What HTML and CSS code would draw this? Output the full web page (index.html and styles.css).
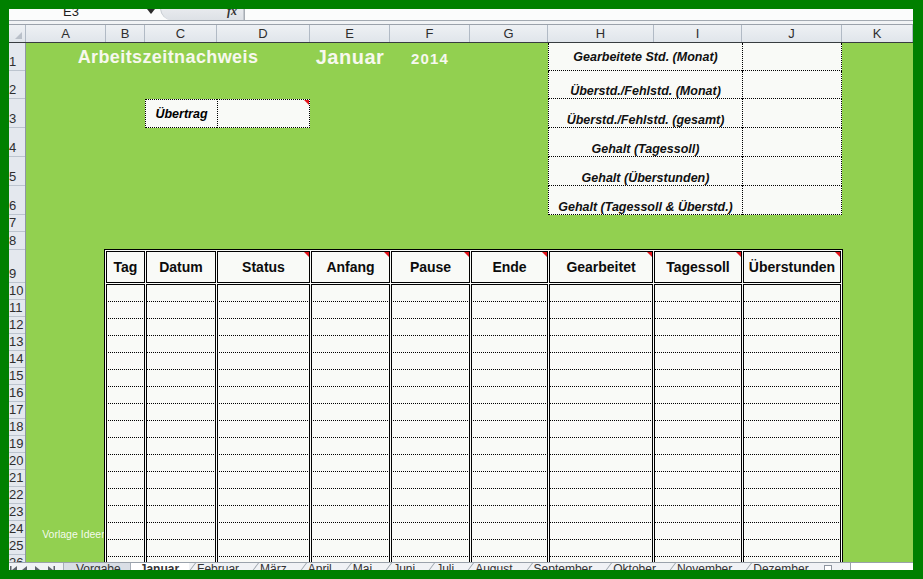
FILE: index.html
```html
<!DOCTYPE html>
<html lang="de">
<head>
  <meta charset="UTF-8">
  <meta name="viewport" content="width=device-width, initial-scale=1.0">
  <title>Arbeitszeitnachweis Januar 2014</title>
  <link rel="stylesheet" href="styles.css">
</head>
<body>
<div class="window">

  <!-- Formula bar (top half hidden by the frame) -->
  <div class="formula-bar">
    <div class="name-box">E3</div>
    <div class="name-drop">
      <svg width="8" height="5" viewBox="0 0 8 5"><polygon points="0,0 8,0 4,5" fill="#2b2b2b"/></svg>
    </div>
    <div class="fx-box"><span class="fx">fx</span></div>
    <div class="formula-input"></div>
  </div>
  <div class="bar-gap"></div>

  <div class="sheet">
    <!-- Column letters -->
    <div class="col-heads">
      <div class="corner"></div>
      <div class="col-head">A</div>
      <div class="col-head">B</div>
      <div class="col-head">C</div>
      <div class="col-head">D</div>
      <div class="col-head">E</div>
      <div class="col-head">F</div>
      <div class="col-head">G</div>
      <div class="col-head">H</div>
      <div class="col-head">I</div>
      <div class="col-head">J</div>
      <div class="col-head">K</div>
    </div>

    <div class="sheet-body">
      <!-- Row numbers -->
      <div class="row-heads">
        <div class="row-head">1</div>
        <div class="row-head">2</div>
        <div class="row-head">3</div>
        <div class="row-head">4</div>
        <div class="row-head">5</div>
        <div class="row-head">6</div>
        <div class="row-head">7</div>
        <div class="row-head">8</div>
        <div class="row-head">9</div>
        <div class="row-head">10</div>
        <div class="row-head">11</div>
        <div class="row-head">12</div>
        <div class="row-head">13</div>
        <div class="row-head">14</div>
        <div class="row-head">15</div>
        <div class="row-head">16</div>
        <div class="row-head">17</div>
        <div class="row-head">18</div>
        <div class="row-head">19</div>
        <div class="row-head">20</div>
        <div class="row-head">21</div>
        <div class="row-head">22</div>
        <div class="row-head">23</div>
        <div class="row-head">24</div>
        <div class="row-head">25</div>
        <div class="row-head">26</div>
      </div>

      <!-- Cells -->
      <div class="cells">
        <div class="sheet-title">Arbeitszeitnachweis</div>
        <div class="sheet-month">Januar</div>
        <div class="sheet-year">2014</div>

        <div class="carry">
          <div class="carry-label">Übertrag</div>
          <div class="carry-value"></div>
        </div>

        <div class="summary">
          <div class="sum-label sum-first">Gearbeitete Std. (Monat)</div><div class="sum-value"></div>
          <div class="sum-label">Überstd./Fehlstd. (Monat)</div><div class="sum-value"></div>
          <div class="sum-label">Überstd./Fehlstd. (gesamt)</div><div class="sum-value"></div>
          <div class="sum-label">Gehalt (Tagessoll)</div><div class="sum-value"></div>
          <div class="sum-label">Gehalt (Überstunden)</div><div class="sum-value"></div>
          <div class="sum-label">Gehalt (Tagessoll &amp; Überstd.)</div><div class="sum-value"></div>
        </div>

        <div class="watermark">Vorlage Ideen</div>

        <div class="times">
          <div class="th">Tag</div>
          <div class="th">Datum</div>
          <div class="th note">Status</div>
          <div class="th note">Anfang</div>
          <div class="th note">Pause</div>
          <div class="th note">Ende</div>
          <div class="th note">Gearbeitet</div>
          <div class="th note">Tagessoll</div>
          <div class="th note">Überstunden</div>

          <div class="td"></div><div class="td"></div><div class="td"></div><div class="td"></div><div class="td"></div><div class="td"></div><div class="td"></div><div class="td"></div><div class="td"></div>
          <div class="td"></div><div class="td"></div><div class="td"></div><div class="td"></div><div class="td"></div><div class="td"></div><div class="td"></div><div class="td"></div><div class="td"></div>
          <div class="td"></div><div class="td"></div><div class="td"></div><div class="td"></div><div class="td"></div><div class="td"></div><div class="td"></div><div class="td"></div><div class="td"></div>
          <div class="td"></div><div class="td"></div><div class="td"></div><div class="td"></div><div class="td"></div><div class="td"></div><div class="td"></div><div class="td"></div><div class="td"></div>
          <div class="td"></div><div class="td"></div><div class="td"></div><div class="td"></div><div class="td"></div><div class="td"></div><div class="td"></div><div class="td"></div><div class="td"></div>
          <div class="td"></div><div class="td"></div><div class="td"></div><div class="td"></div><div class="td"></div><div class="td"></div><div class="td"></div><div class="td"></div><div class="td"></div>
          <div class="td"></div><div class="td"></div><div class="td"></div><div class="td"></div><div class="td"></div><div class="td"></div><div class="td"></div><div class="td"></div><div class="td"></div>
          <div class="td"></div><div class="td"></div><div class="td"></div><div class="td"></div><div class="td"></div><div class="td"></div><div class="td"></div><div class="td"></div><div class="td"></div>
          <div class="td"></div><div class="td"></div><div class="td"></div><div class="td"></div><div class="td"></div><div class="td"></div><div class="td"></div><div class="td"></div><div class="td"></div>
          <div class="td"></div><div class="td"></div><div class="td"></div><div class="td"></div><div class="td"></div><div class="td"></div><div class="td"></div><div class="td"></div><div class="td"></div>
          <div class="td"></div><div class="td"></div><div class="td"></div><div class="td"></div><div class="td"></div><div class="td"></div><div class="td"></div><div class="td"></div><div class="td"></div>
          <div class="td"></div><div class="td"></div><div class="td"></div><div class="td"></div><div class="td"></div><div class="td"></div><div class="td"></div><div class="td"></div><div class="td"></div>
          <div class="td"></div><div class="td"></div><div class="td"></div><div class="td"></div><div class="td"></div><div class="td"></div><div class="td"></div><div class="td"></div><div class="td"></div>
          <div class="td"></div><div class="td"></div><div class="td"></div><div class="td"></div><div class="td"></div><div class="td"></div><div class="td"></div><div class="td"></div><div class="td"></div>
          <div class="td"></div><div class="td"></div><div class="td"></div><div class="td"></div><div class="td"></div><div class="td"></div><div class="td"></div><div class="td"></div><div class="td"></div>
          <div class="td"></div><div class="td"></div><div class="td"></div><div class="td"></div><div class="td"></div><div class="td"></div><div class="td"></div><div class="td"></div><div class="td"></div>
          <div class="td"></div><div class="td"></div><div class="td"></div><div class="td"></div><div class="td"></div><div class="td"></div><div class="td"></div><div class="td"></div><div class="td"></div>
        </div>
      </div>
    </div>
  </div>

  <!-- Sheet tabs (bottom half hidden by the frame) -->
  <div class="tabs">
    <div class="tab-nav">
      <svg width="54" height="14" viewBox="0 0 54 14">
        <g fill="#5d636b">
          <rect x="1" y="3" width="1.5" height="8"/>
          <polygon points="3,7 8,3 8,11"/>
          <polygon points="13,7 18,3 18,11"/>
          <polygon points="26,3 26,11 31,7"/>
          <polygon points="39,3 39,11 44,7"/>
          <rect x="44.5" y="3" width="1.5" height="8"/>
        </g>
      </svg>
    </div>
    <div class="tab tab-first">Vorgabe</div>
    <div class="tab tab-active">Januar</div>
    <div class="tab">Februar</div>
    <div class="tab">März</div>
    <div class="tab">April</div>
    <div class="tab">Mai</div>
    <div class="tab">Juni</div>
    <div class="tab">Juli</div>
    <div class="tab">August</div>
    <div class="tab">September</div>
    <div class="tab">Oktober</div>
    <div class="tab">November</div>
    <div class="tab">Dezember</div>
    <div class="tab-add"></div>
    <div class="tab-scroll">
      <svg width="6" height="8" viewBox="0 0 6 8"><polygon points="0,4 6,0 6,8" fill="#4a4f56"/></svg>
    </div>
    <div class="hscroll"></div>
  </div>

</div>
</body>
</html>
```

FILE: styles.css
```css
/* General */
* {
  box-sizing: border-box;
}

:root {
  --cols: 80px 39px 72px 93px 80px 80px 78px 106px 88px 100px 71px;
  --rows: 28px 28px 29px 29px 29px 29px 17px 18px 33px repeat(17, 17px);
  --green: #92d050;
  --paper: #f9faf7;
  --head-bg: #e4e8ee;
}

body {
  margin: 0;
  background-color: #008000;
  font-family: "Liberation Sans", Arial, sans-serif;
  overflow: hidden;
}

.window {
  width: 904px;
  height: 561px;
  margin: 9px 0 0 9px;
  background-color: #fbfcfc;
  overflow: hidden;
  display: flex;
  flex-direction: column;
}

/* Formula bar */
.formula-bar {
  height: 12px;
  flex: none;
  display: flex;
  align-items: flex-end;
  overflow: hidden;
  border-bottom: 1px solid #a3aab2;
}

.name-box {
  width: 124px;
  padding-bottom: 2px;
  text-align: center;
  font-size: 13px;
  line-height: 13px;
  color: #1e1e1e;
}

.name-drop {
  width: 27px;
  height: 14px;
  display: flex;
  align-items: flex-end;
  justify-content: flex-end;
  padding: 0 5px 6px 0;
}

.fx-box {
  width: 84px;
  height: 24px;
  display: flex;
  align-items: flex-end;
  justify-content: flex-end;
  padding: 0 6px 3px 0;
  border: 1px solid #c3c8ce;
  border-bottom: none;
  border-radius: 12px 0 0 12px;
  background: linear-gradient(#f3f4f6, #dde1e6);
}

.fx {
  font-family: "Liberation Serif", serif;
  font-style: italic;
  font-weight: bold;
  font-size: 12px;
  line-height: 12px;
  color: #333;
}

.formula-input {
  flex: 1;
  height: 14px;
  border-left: 1px solid #a7adb4;
}

.bar-gap {
  height: 3px;
  flex: none;
  background-color: #f1f3f5;
}

/* Sheet */
.sheet {
  height: 538px;
  flex: none;
  overflow: hidden;
  display: flex;
  flex-direction: column;
}

.col-heads {
  height: 19px;
  flex: none;
  display: grid;
  grid-template-columns: 17px var(--cols);
  border-top: 1px solid #9ba2ab;
  border-bottom: 1px solid #383c40;
  background: linear-gradient(#eef1f4, #e0e5eb);
}

.col-head {
  display: flex;
  align-items: center;
  justify-content: center;
  border-right: 1px solid #b1bac5;
  font-size: 13px;
  color: #2e2e2e;
}

.corner {
  position: relative;
  border-right: 1px solid #b1bac5;
}

.corner::after {
  content: "";
  position: absolute;
  right: 3px;
  bottom: 3px;
  border-left: 7px solid transparent;
  border-bottom: 7px solid #b9c0c9;
}

.sheet-body {
  flex: 1;
  min-height: 0;
  display: flex;
}

.row-heads {
  width: 17px;
  flex: none;
  display: grid;
  grid-template-rows: var(--rows);
  background-color: var(--head-bg);
  border-right: 1px solid #8e97a2;
}

.row-head {
  display: flex;
  align-items: flex-end;
  padding-bottom: 2px;
  border-bottom: 1px solid #bcc4ce;
  font-size: 13px;
  line-height: 13px;
  color: #2e2e2e;
}

.cells {
  flex: 1;
  display: grid;
  grid-template-columns: var(--cols);
  grid-template-rows: var(--rows);
  background-color: var(--green);
}

/* Title row */
.sheet-title,
.sheet-month,
.sheet-year {
  grid-row: 1;
  display: flex;
  align-items: center;
  justify-content: center;
  color: #f7f8ee;
  font-weight: bold;
}

.sheet-title {
  grid-column: 1 / 5;
  font-size: 18px;
  letter-spacing: 0.4px;
}

.sheet-month {
  grid-column: 5;
  font-size: 20px;
  letter-spacing: 0.5px;
}

.sheet-year {
  grid-column: 6;
  font-size: 15px;
  letter-spacing: 1.2px;
  padding-top: 2px;
}

/* Übertrag */
.carry {
  grid-column: 3 / 5;
  grid-row: 3;
  display: flex;
}

.carry-label {
  width: 72px;
  display: flex;
  align-items: center;
  justify-content: center;
  background-color: var(--paper);
  border: 1px dotted #000;
  border-right: none;
  font-size: 12.5px;
  font-weight: bold;
  font-style: italic;
}

.carry-value {
  flex: 1;
  position: relative;
  background-color: var(--paper);
  border: 1px dotted #000;
}

.carry-value::after,
.th.note::after {
  content: "";
  position: absolute;
  top: 0;
  right: 0;
  border-top: 5px solid #e3141b;
  border-left: 5px solid transparent;
}

/* Summary block H1:J6 */
.summary {
  grid-column: 8 / 11;
  grid-row: 1 / 7;
  display: grid;
  grid-template-columns: 194px 100px;
  grid-template-rows: 28px 28px 29px 29px 29px 29px;
}

.sum-label {
  display: flex;
  align-items: flex-end;
  justify-content: center;
  background-color: var(--paper);
  border-left: 1px dotted #000;
  border-bottom: 1px dotted #000;
  font-size: 12.5px;
  line-height: 14px;
  font-weight: bold;
  font-style: italic;
  color: #111;
  white-space: nowrap;
}

.sum-first {
  align-items: center;
}

.sum-value {
  background-color: var(--paper);
  border-left: 1px dotted #000;
  border-right: 1px dotted #000;
  border-bottom: 1px dotted #000;
}

.watermark {
  grid-column: 1;
  grid-row: 24;
  align-self: end;
  justify-self: end;
  margin: 0 -1px -2px 0;
  color: rgba(255, 255, 255, 0.92);
  font-size: 10.5px;
  white-space: nowrap;
}

/* Time table */
.times {
  grid-column: 2 / 11;
  grid-row: 9 / -1;
  align-self: start;
  justify-self: start;
  margin: -1px 0 0 -2px;
  display: grid;
  grid-template-columns: 39px 70px 93px 79px 79px 77px 104px 88px 98px;
  column-gap: 1px;
  padding: 1px;
  border: 1px solid #000;
  background-color: var(--paper);
}

.th {
  position: relative;
  height: 32px;
  margin-bottom: 1px;
  display: flex;
  align-items: center;
  justify-content: center;
  border: 1px solid #000;
  font-size: 14px;
  font-weight: bold;
  color: #0c0c0c;
  white-space: nowrap;
}

.td {
  height: 17px;
  border-left: 1px solid #000;
  border-right: 1px solid #000;
  border-bottom: 1px dotted #000;
}

.td:nth-child(-n+18) {
  height: 18px;
  border-top: 1px solid #000;
}

/* Sheet tabs */
.tabs {
  height: 20px;
  flex: none;
  display: flex;
  border-top: 1px solid #9aa2ab;
  background-color: #f0f2f5;
  font-size: 12px;
  line-height: 12px;
  color: #333;
}

.tab-nav {
  width: 54px;
  flex: none;
}

.tab {
  position: relative;
  padding: 0 13px 0 8px;
  white-space: nowrap;
}

.tab::before {
  content: "";
  position: absolute;
  left: 6px;
  top: 0;
  width: 1px;
  height: 100%;
  background-color: #9aa2ab;
  transform-origin: top left;
  transform: skewX(-37deg);
}

.tab-first {
  padding: 0 9px 0 12px;
  background-color: #d9dee5;
  border-left: 1px solid #a6aeb8;
  border-right: 1px solid #a6aeb8;
}

.tab-active {
  padding: 0 10px 0 9px;
  background-color: #fff;
  font-weight: bold;
}

.tab-first::before,
.tab-active::before {
  display: none;
}

.tab-add {
  width: 8px;
  height: 9px;
  margin: 2px 0 0 2px;
  border: 1px solid #8d959f;
  background-color: #fff;
}

.tab-scroll {
  width: 18px;
  padding: 4px 0 0 5px;
}

.hscroll {
  flex: 1;
  background-color: #fff;
  border-left: 1px solid #9aa2ab;
}
```
